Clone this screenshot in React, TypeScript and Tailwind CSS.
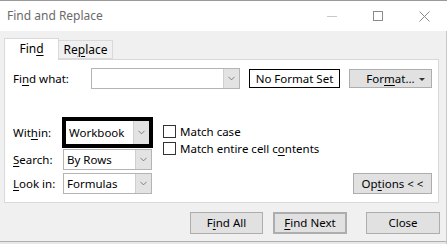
import { ChevronDown } from 'lucide-react';

const U = ({ children }: { children: string }) => <span className="underline underline-offset-2">{children}</span>;

const Select = ({ value, className = '' }: { value: string; className?: string }) => (
    <div className={`flex items-stretch bg-white border border-[#b4b4b4] ${className}`}>
        <div className="flex-1 flex items-center pl-[3px] text-black">{value}</div>
        <div className="w-[16px] flex items-center justify-center bg-[#e3e3e3] border-l border-[#cfcfcf]">
            <ChevronDown size={11} strokeWidth={1.5} className="text-[#555]" />
        </div>
    </div>
);

const Btn = ({ children, className = '' }: { children: React.ReactNode; className?: string }) => (
    <button className={`flex items-center justify-center bg-[#e1e1e1] border border-[#adadad] text-black ${className}`}>
        {children}
    </button>
);

const Check = ({ label }: { label: React.ReactNode }) => (
    <div className="flex items-center gap-[4px] h-[17px]">
        <div className="w-[13px] h-[13px] bg-white border border-[#333]" />
        <span>{label}</span>
    </div>
);

export default function App() {
    return (
        <div
            className="w-[447px] h-[244px] bg-[#f0f0f0] border-t border-[#9a9a9a] text-[11.5px] text-black overflow-hidden flex flex-col"
            style={{ fontFamily: '"Noto Sans", "Open Sans", sans-serif' }}
        >
            {/* Title bar */}
            <div className="h-[30px] bg-white flex items-center justify-between pl-[7px] shrink-0">
                <span className="text-[12px] text-[#6a6a6a]">Find and Replace</span>
                <div className="flex items-center h-full">
                    <div className="w-[46px] flex justify-center">
                        <div className="w-[10px] h-px bg-[#c8c8c8] mt-[1px]" />
                    </div>
                    <div className="w-[46px] flex justify-center">
                        <div className="w-[10px] h-[10px] border border-[#8a8a8a]" />
                    </div>
                    <div className="w-[46px] flex justify-center">
                        <svg width="11" height="11" viewBox="0 0 11 11">
                            <path d="M0.5 0.5 L10.5 10.5 M10.5 0.5 L0.5 10.5" stroke="#8a8a8a" strokeWidth="1" />
                        </svg>
                    </div>
                </div>
            </div>

            {/* Body */}
            <div className="flex-1 flex flex-col pl-[4px] pr-[7px] pt-[7px] border-r border-[#c8c8c8]">
                {/* Tabs */}
                <div className="flex items-end h-[21px] relative z-10 text-[12px]">
                    <div className="w-[55px] h-[22px] bg-white border border-b-0 border-[#d9d9d9] flex items-center justify-center -mb-px pb-[1px]">
                        Fin<U>d</U>
                    </div>
                    <div className="w-[54px] h-[19px] bg-[#f0f0f0] border border-l-0 border-[#d9d9d9] flex items-center justify-center">
                        Re<U>p</U>lace
                    </div>
                </div>

                {/* Panel */}
                <div className="w-[435px] h-[144px] bg-white border border-[#d9d9d9] pt-[8px] pl-[8px] pr-[6px] flex flex-col">
                    <div className="flex items-center h-[21px]">
                        <span className="w-[78px]">Fi<U>n</U>d what:</span>
                        <Select value="" className="w-[149px] h-[21px]" />
                        <div className="ml-[9px] w-[91px] h-[19px] border border-black flex items-center justify-center">
                            No Format Set
                        </div>
                        <Btn className="ml-[9px] w-[83px] h-[19px] relative">
                            For<U>m</U>at...
                            <svg className="absolute right-[6px] top-[8px]" width="6" height="4" viewBox="0 0 6 4">
                                <path d="M0 0 L6 0 L3 3 Z" fill="#333" />
                            </svg>
                        </Btn>
                    </div>

                    <div className="flex mt-[28px]">
                        {/* labels */}
                        <div className="w-[49px] flex flex-col">
                            <div className="h-[31px] flex items-center">Wit<U>h</U>in:</div>
                            <div className="h-[22px] mt-[1px] flex items-center"><U>S</U>earch:</div>
                            <div className="h-[22px] mt-[2px] flex items-center"><U>L</U>ook in:</div>
                        </div>
                        {/* selects */}
                        <div className="w-[91px] flex flex-col items-start">
                            <div className="w-[91px] h-[31px] border-[4px] border-black">
                                <Select value="Workbook" className="w-full h-full border-0" />
                            </div>
                            <Select value="By Rows" className="ml-[1px] mt-[1px] w-[89px] h-[21px]" />
                            <Select value="Formulas" className="ml-[1px] mt-[3px] w-[89px] h-[21px]" />
                        </div>
                        {/* checks */}
                        <div className="ml-[10px] pt-[6px] flex flex-col">
                            <Check label="Match case" />
                            <Check label={<>Match entire cell c<U>o</U>ntents</>} />
                        </div>
                        <div className="flex-1 flex items-end justify-end pb-[1px]">
                            <Btn className="w-[79px] h-[21px]">
                                Op<U>t</U>ions &lt; &lt;
                            </Btn>
                        </div>
                    </div>
                </div>

                {/* Bottom buttons */}
                <div className="flex justify-end mt-[9px] mr-[-1px]">
                    <Btn className="w-[73px] h-[22px]">F<U>i</U>nd All</Btn>
                    <Btn className="ml-[10px] w-[74px] h-[22px] border-2 border-[#0078d7]"><U>F</U>ind Next</Btn>
                    <Btn className="ml-[19px] w-[74px] h-[22px]">Close</Btn>
                </div>
                <div className="flex-1" />
                <div className="h-[3px] -ml-[4px] -mr-[7px] border-t border-[#b0b0b0] bg-[#e8e8e8] mb-0" />
            </div>
        </div>
    );
}
